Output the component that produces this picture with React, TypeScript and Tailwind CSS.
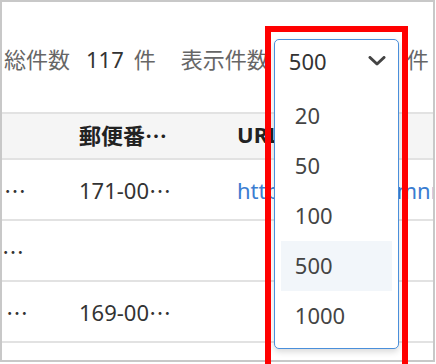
const options = ["20", "50", "100", "500", "1000"];

// Japanese fonts centre the ellipsis dots
const Ell = () => <span className="font-['Noto_Sans_CJK_JP']">…</span>;

const rows = [
  { leadPad: "pl-[2px]", zip: "171-00", url: "https://www.ccimnn/" },
  { leadPad: "pl-[0px]", zip: "", url: "" },
  { leadPad: "pl-[4px]", zip: "169-00", url: "" },
];

const Chevron = () => (
  <svg width="18" height="10" viewBox="0 0 18 10" className="text-[#444]">
    <path d="M2 1.5 L9 8 L16 1.5" fill="none" stroke="currentColor" strokeWidth="3" strokeLinecap="round" strokeLinejoin="round" />
  </svg>
);

const PageSizeSelect = () => {
  return (
    <div className="relative w-[125px] h-[48px] shrink-0">
      {/* open select: trigger + list share one border */}
      <div className="absolute left-0 top-0 w-[125px] z-10 bg-white border border-[#4a8fdb] rounded-[5px] shadow-[0_3px_6px_rgba(0,0,0,0.15)]">
        <div className="h-[51px] pb-[9px] flex items-center justify-between pl-[14px] pr-[12px] text-[#333]">
          <span>500</span>
          <Chevron />
        </div>
        <ul className="px-[6px] pb-[7px]">
          {options.map((o) => (
            <li
              key={o}
              className={`h-[50px] pb-[3px] flex items-center pl-[14px] text-[#444] ${o === "500" ? "bg-[#f2f6fa]" : ""}`}
            >
              {o}
            </li>
          ))}
        </ul>
      </div>
      {/* red annotation box */}
      <div className="absolute left-[-9px] top-[-13px] w-[143px] h-[345px] border-[6px] border-[#ff0000] z-20" />
    </div>
  );
};

export default function App() {
  return (
    <div
      className="w-[436px] h-[364px] overflow-hidden bg-white relative text-[22px] leading-none"
      style={{ fontFamily: '"Noto Sans", "Noto Sans CJK JP", sans-serif' }}
    >
      <div className="w-[435px] h-[362px] border-2 border-[#c8c8c8]">
        {/* toolbar */}
        <div className="h-[110px] pt-[37px] flex items-start">
          <div className="h-[48px] pb-[9px] flex items-center pl-[2px] text-[#666]">
            <span>総件数</span>
            <span className="ml-[16px] text-[#333]">117</span>
            <span className="ml-[10px]">件</span>
            <span className="ml-[25px]">表示件数</span>
            <span className="ml-[5px] self-start">
              <PageSizeSelect />
            </span>
            <span className="ml-[8px]">件</span>
          </div>
        </div>

        {/* table */}
        <div className="border-t-2 border-[#e2e2e2]">
          <div className="grid grid-cols-[61px_158px_1fr] h-[46px] pb-[4px] bg-[#f5f5f5] border-b-2 border-[#e2e2e2] items-center font-bold text-[#222]">
            <div />
            <div className="pl-[16px]">
              郵便番<Ell />
            </div>
            <div className="pl-[16px]">URL</div>
          </div>
          {rows.map((r, i) => (
            <div
              key={i}
              className="grid grid-cols-[61px_158px_1fr] h-[61px] border-b-2 border-[#e2e2e2] items-center text-[#333]"
            >
              <div className={`${r.leadPad} overflow-hidden whitespace-nowrap`}>
                <Ell />
              </div>
              <div className="pl-[16px] whitespace-nowrap">
                {r.zip}
                {r.zip && <Ell />}
              </div>
              <div className="pl-[16px] whitespace-nowrap overflow-hidden text-[#3b7dd1]">{r.url}</div>
            </div>
          ))}
        </div>
      </div>
    </div>
  );
}
